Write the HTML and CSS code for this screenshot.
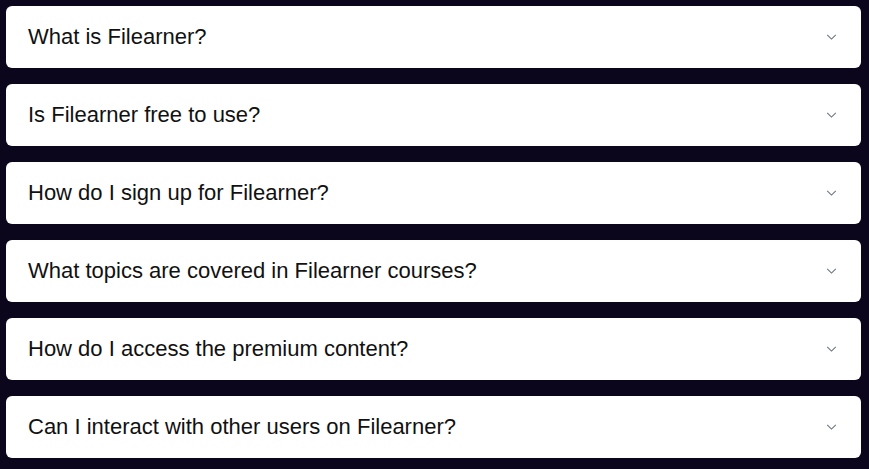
FILE: index.html
```html
<!DOCTYPE html>
<html>
<head>
<meta charset="utf-8">
<link rel="stylesheet" href="styles.css">
</head>
<body>
<div class="faq">
  <div class="item"><span class="q">What is Filearner?</span><svg class="chev" viewBox="0 0 12 7" width="11" height="6"><path d="M1 1l5 5 5-5" fill="none" stroke="#6b7280" stroke-width="1.2"/></svg></div>
  <div class="item"><span class="q">Is Filearner free to use?</span><svg class="chev" viewBox="0 0 12 7" width="11" height="6"><path d="M1 1l5 5 5-5" fill="none" stroke="#6b7280" stroke-width="1.2"/></svg></div>
  <div class="item"><span class="q">How do I sign up for Filearner?</span><svg class="chev" viewBox="0 0 12 7" width="11" height="6"><path d="M1 1l5 5 5-5" fill="none" stroke="#6b7280" stroke-width="1.2"/></svg></div>
  <div class="item"><span class="q">What topics are covered in Filearner courses?</span><svg class="chev" viewBox="0 0 12 7" width="11" height="6"><path d="M1 1l5 5 5-5" fill="none" stroke="#6b7280" stroke-width="1.2"/></svg></div>
  <div class="item"><span class="q">How do I access the premium content?</span><svg class="chev" viewBox="0 0 12 7" width="11" height="6"><path d="M1 1l5 5 5-5" fill="none" stroke="#6b7280" stroke-width="1.2"/></svg></div>
  <div class="item"><span class="q">Can I interact with other users on Filearner?</span><svg class="chev" viewBox="0 0 12 7" width="11" height="6"><path d="M1 1l5 5 5-5" fill="none" stroke="#6b7280" stroke-width="1.2"/></svg></div>
</div>
</body>
</html>
```
FILE: styles.css
```css
html, body {
  margin: 0;
  background: #0c061c;
}
body {
  padding: 6px 8px 0 6px;
  font-family: "Liberation Sans", Arial, sans-serif;
}
.faq {
  display: flex;
  flex-direction: column;
  gap: 16px;
}
.item {
  background: #fff;
  border-radius: 6px;
  height: 62px;
  display: flex;
  align-items: center;
  justify-content: space-between;
  padding: 0 24px 0 22px;
  box-sizing: border-box;
}
.q {
  font-size: 22px;
  color: #111;
}
.chev {
  display: block;
}
```
